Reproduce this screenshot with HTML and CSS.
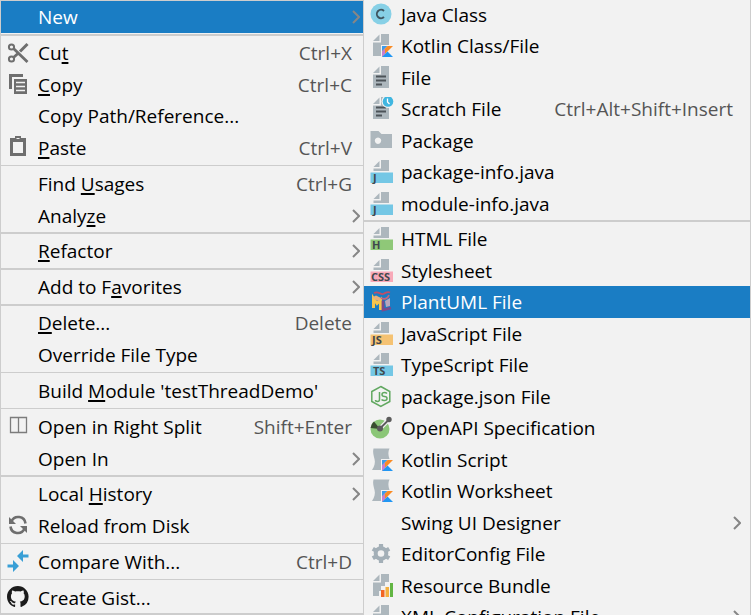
FILE: index.html
```html
<!DOCTYPE html>
<html lang="en">
<head>
<meta charset="utf-8">
<title>Context menu</title>
<link rel="stylesheet" href="styles.css">
</head>
<body>
<svg class="defs" aria-hidden="true">
  <defs>
    <g id="kotlin-badge">
      <path d="M12 12h5.500l-5.500 5.500z" fill="#3d9be9"/>
      <path d="M17.500 12H23L12 23V17.500z" fill="#f98b25"/>
      <path d="M12 17.500l3-3v5.500l-3 3z" fill="#c77fd0"/>
      <path d="M12 23l5.500-5.500L23 23z" fill="#2196f3"/>
    </g>
    <g id="doc-top" fill="#adb7bd">
      <path d="M3.500 7L9.500 1v6z"/>
      <path d="M11 0h8v11H3.500V8.500H11z"/>
    </g>
    <g id="doc" fill="#adb7bd">
      <path d="M3 7L9.500 .5V7z"/>
      <path d="M11 0h8v22H3V8.500h8z"/>
    </g>
    <g id="doc-cut" fill="#adb7bd">
      <path d="M3 7L9.500 .5V7z"/>
      <path d="M11 0h8v11h-8v11H3V8.500h8z"/>
    </g>
    <path id="lines" d="M6 10.500h10M6 14.500h10M6 18.500h6" stroke="#4c5358" stroke-width="2"/>
    <path id="scroll" fill="#adb7bd" d="M3.500 .5H19.500c-1.500 3-1.500 6 0 10.500H11V22H2c2.500-4 3.500-7 2.500-11C3.500 7 2.500 4 3.500 .5z"/>
    <path id="chevron" d="M1 1l6 6-6 6" fill="none" stroke="#868686" stroke-width="2"/>
  </defs>
</svg>
<main class="menus">
  <div class="menu menu-context" role="menu" aria-label="Context">
    <div class="group">
      <button class="item active" role="menuitem"><span class="icon"></span><span class="label">New</span><svg class="arrow" viewBox="0 0 8 14"><use href="#chevron"/></svg></button>
    </div>
    <hr class="thick">
    <div class="group">
      <button class="item" role="menuitem"><svg class="icon" viewBox="0 0 24 24"><g fill="none" stroke="#6e6e6e"><circle cx="5.500" cy="6" r="2.600" stroke-width="2"/><circle cx="5.500" cy="18" r="2.600" stroke-width="2"/><path d="M7.500 7.500L21.500 21M7.500 16.500l5-4.500" stroke-width="2.800"/><path d="M14 10.500L21.500 3" stroke-width="3"/></g></svg><span class="label">Cu<u>t</u></span><kbd>Ctrl+X</kbd></button>
      <button class="item" role="menuitem"><svg class="icon" viewBox="0 0 24 24"><path d="M3 1h14v3H6v12H3z" fill="#6e6e6e"/><path d="M8 6h13v15H8z" fill="#6e6e6e"/><path d="M10 9.500h9M10 13.500h9M10 17.500h9" stroke="#f2f2f2" stroke-width="1.500"/></svg><span class="label"><u>C</u>opy</span><kbd>Ctrl+C</kbd></button>
      <button class="item" role="menuitem"><span class="icon"></span><span class="label">Copy Path/Reference...</span></button>
      <button class="item" role="menuitem"><svg class="icon" viewBox="0 0 24 24"><path fill="#6e6e6e" fill-rule="evenodd" d="M4 2h5V0h6v2h5v18H4zM7 6v11h10V6z"/><path d="M10.500 2.500h3" stroke="#f2f2f2"/></svg><span class="label"><u>P</u>aste</span><kbd>Ctrl+V</kbd></button>
    </div>
    <hr>
    <div class="group">
      <button class="item" role="menuitem"><span class="icon"></span><span class="label">Find <u>U</u>sages</span><kbd>Ctrl+G</kbd></button>
      <button class="item" role="menuitem"><span class="icon"></span><span class="label">Analy<u>z</u>e</span><svg class="arrow" viewBox="0 0 8 14"><use href="#chevron"/></svg></button>
    </div>
    <hr class="thick">
    <div class="group">
      <button class="item" role="menuitem"><span class="icon"></span><span class="label"><u>R</u>efactor</span><svg class="arrow" viewBox="0 0 8 14"><use href="#chevron"/></svg></button>
    </div>
    <hr class="thick">
    <div class="group">
      <button class="item" role="menuitem"><span class="icon"></span><span class="label">Add to F<u>a</u>vorites</span><svg class="arrow" viewBox="0 0 8 14"><use href="#chevron"/></svg></button>
    </div>
    <hr class="thick">
    <div class="group">
      <button class="item" role="menuitem"><span class="icon"></span><span class="label"><u>D</u>elete...</span><kbd>Delete</kbd></button>
      <button class="item" role="menuitem"><span class="icon"></span><span class="label">Override File Type</span></button>
    </div>
    <hr>
    <div class="group tight">
      <button class="item" role="menuitem"><span class="icon"></span><span class="label">Build <u>M</u>odule 'testThreadDemo'</span></button>
    </div>
    <hr>
    <div class="group">
      <button class="item" role="menuitem"><svg class="icon" viewBox="0 0 24 24"><path d="M4.500 2.500h16v15h-16zM12.500 2.500v15" fill="none" stroke="#7c7c7c" stroke-width="1.300"/></svg><span class="label">Open in Right Split</span><kbd>Shift+Enter</kbd></button>
      <button class="item" role="menuitem"><span class="icon"></span><span class="label">Open In</span><svg class="arrow" viewBox="0 0 8 14"><use href="#chevron"/></svg></button>
    </div>
    <hr class="thick">
    <div class="group">
      <button class="item" role="menuitem"><span class="icon"></span><span class="label">Local <u>H</u>istory</span><svg class="arrow" viewBox="0 0 8 14"><use href="#chevron"/></svg></button>
      <button class="item" role="menuitem"><svg class="icon" viewBox="0 0 24 24"><g fill="none" stroke="#6e6e6e" stroke-width="2.600"><path d="M5.500 7.500a7.300 7.300 0 0 1 14 2"/><path d="M18.500 14.500A7.300 7.300 0 0 1 4.500 12.500"/></g><path d="M3 3v7h7z" fill="#6e6e6e"/><path d="M21 19v-7h-7z" fill="#6e6e6e"/></svg><span class="label">Reload from Disk</span></button>
    </div>
    <hr>
    <div class="group tight">
      <button class="item" role="menuitem"><svg class="icon" viewBox="0 0 24 24"><path d="M22.500 4.500v3H17V12l-6-6 6-6v4.500zM1.500 14.500v3H7V22l6-6-6-6v4.500z" fill="#389fd6"/></svg><span class="label">Compare With...</span><kbd>Ctrl+D</kbd></button>
    </div>
    <hr>
    <div class="group tight">
      <button class="item" role="menuitem"><svg class="icon" viewBox="0 0 24 24"><path transform="translate(1 0) scale(1.350)" fill="#1b1b1b" d="M8 0C3.580 0 0 3.580 0 8c0 3.540 2.290 6.530 5.470 7.590.4.070.55-.17.55-.38 0-.19-.01-.82-.01-1.490-2.010.37-2.530-.49-2.690-.94-.09-.23-.48-.94-.82-1.130-.28-.15-.68-.52-.01-.53.63-.01 1.080.58 1.230.82.72 1.210 1.870.87 2.330.66.07-.52.28-.87.51-1.070-1.780-.2-3.640-.89-3.640-3.950 0-.87.31-1.590.82-2.150-.08-.2-.36-1.020.08-2.120 0 0 .67-.21 2.200.82.64-.18 1.320-.27 2-.27s1.360.09 2 .27c1.530-1.040 2.200-.82 2.200-.82.44 1.100.16 1.920.08 2.120.51.56.82 1.270.82 2.150 0 3.070-1.870 3.750-3.650 3.950.29.25.54.73.54 1.480 0 1.070-.01 1.930-.01 2.200 0 .21.15.46.55.38A8.010 8.010 0 0 0 16 8c0-4.420-3.580-8-8-8z"/></svg><span class="label">Create Gist...</span></button>
    </div>
  </div>

  <div class="menu menu-new" role="menu" aria-label="New">
    <div class="group">
      <button class="item" role="menuitem"><svg class="icon" viewBox="0 0 24 24"><circle cx="11" cy="11" r="10.500" fill="#87d0e6"/><path d="M14 8a4.200 4.200 0 1 0 0 6" fill="none" stroke="#3f5560" stroke-width="1.900"/></svg><span class="label">Java Class</span></button>
      <button class="item" role="menuitem"><svg class="icon" viewBox="0 0 24 24"><use href="#doc-cut"/><use href="#kotlin-badge"/></svg><span class="label">Kotlin Class/File</span></button>
      <button class="item" role="menuitem"><svg class="icon" viewBox="0 0 24 24"><use href="#doc"/><use href="#lines"/></svg><span class="label">File</span></button>
      <button class="item" role="menuitem"><svg class="icon" viewBox="0 0 24 24"><use href="#doc"/><use href="#lines"/><circle cx="18" cy="4.500" r="6.500" fill="#f2f2f2"/><circle cx="18" cy="4.500" r="5.300" fill="#40b6e0"/><path d="M17.500 1.500v3.500l2 2" fill="none" stroke="#fff" stroke-width="1.300"/></svg><span class="label">Scratch File</span><kbd>Ctrl+Alt+Shift+Insert</kbd></button>
      <button class="item" role="menuitem"><svg class="icon" viewBox="0 0 24 24"><path fill="#adb7bd" fill-rule="evenodd" d="M.5 2H8.500l3 3H22v14H.5zM8 8.500a3.200 3.200 0 1 0 .01 0z"/></svg><span class="label">Package</span></button>
      <button class="item" role="menuitem"><svg class="icon" viewBox="0 0 24 24"><use href="#doc-top"/><path d="M.5 12.500H23V23H.5z" fill="#74c7e5"/><text x="3" y="22">J</text></svg><span class="label">package-info.java</span></button>
      <button class="item" role="menuitem"><svg class="icon" viewBox="0 0 24 24"><use href="#doc-top"/><path d="M.5 12.500H23V23H.5z" fill="#74c7e5"/><text x="3" y="22">J</text></svg><span class="label">module-info.java</span></button>
    </div>
    <hr class="thick">
    <div class="group">
      <button class="item" role="menuitem"><svg class="icon" viewBox="0 0 24 24"><use href="#doc-top"/><path d="M.5 12.500H23V23H.5z" fill="#8fc878"/><text x="2" y="22">H</text></svg><span class="label">HTML File</span></button>
      <button class="item" role="menuitem"><svg class="icon" viewBox="0 0 24 24"><use href="#doc-top"/><path d="M.5 12.500H23V23H.5z" fill="#f8a9b8"/><text x="1" y="22">CSS</text></svg><span class="label">Stylesheet</span></button>
      <button class="item active" role="menuitem"><svg class="icon" viewBox="0 0 24 24"><path d="M3.500 18V8.500l3.500 5 3.500-3.500v10" fill="none" stroke="#f7c64d" stroke-width="3"/><path d="M2 7.500l4-2 6 3-3 3z" fill="#e9b07c"/><path d="M13 10.500v9.500l8-2" fill="none" stroke="#7b4a8c" stroke-width="2.800"/><path d="M15 11l5-3v8l-4 1z" fill="#b7a5bd"/><path d="M4 3c5-2.500 6 2 9 1s4-3 7-1.500" fill="none" stroke="#c04e68" stroke-width="1.800"/><path d="M11 8c4 2 7 0 8-3" fill="none" stroke="#c5657e" stroke-width="1.800"/></svg><span class="label">PlantUML File</span></button>
      <button class="item" role="menuitem"><svg class="icon" viewBox="0 0 24 24"><use href="#doc-top"/><path d="M.5 12.500H23V23H.5z" fill="#f5c272"/><text x="2" y="22">JS</text></svg><span class="label">JavaScript File</span></button>
      <button class="item" role="menuitem"><svg class="icon" viewBox="0 0 24 24"><use href="#doc-top"/><path d="M.5 12.500H23V23H.5z" fill="#74c7e5"/><text x="3" y="22">TS</text></svg><span class="label">TypeScript File</span></button>
      <button class="item" role="menuitem"><svg class="icon" viewBox="0 0 24 24"><g fill="none" stroke="#61a860" stroke-width="1.500"><path d="M10.800 1.500l9 5v10l-9 5-9-5v-10z"/><path d="M9.500 7v7.500q0 2-2 2t-2-1.500M17 8.500q-1-1-2.500-1-2.500 0-2.500 2t2.500 2 2.500 2-2.500 2q-2 0-3-1"/></g></svg><span class="label">package.json File</span></button>
      <button class="item" role="menuitem"><svg class="icon" viewBox="0 0 24 24"><circle cx="10" cy="13" r="9.500" fill="#8bc677"/><path d="M10 13L.5 12A9.500 9.500 0 0 1 4 5.500z" fill="#394d2f"/><path d="M10 12.500L19 3.500" stroke="#f2f2f2" stroke-width="4.500"/><path d="M10 12.500L19 3.500" stroke="#5c5c5c" stroke-width="1.800"/><circle cx="10" cy="12.500" r="3" fill="#5c5c5c"/><circle cx="19" cy="3.500" r="2.700" fill="#5c5c5c"/></svg><span class="label">OpenAPI Specification</span></button>
      <button class="item" role="menuitem"><svg class="icon" viewBox="0 0 24 24"><use href="#scroll"/><use href="#kotlin-badge"/></svg><span class="label">Kotlin Script</span></button>
      <button class="item" role="menuitem"><svg class="icon" viewBox="0 0 24 24"><use href="#scroll"/><use href="#kotlin-badge"/></svg><span class="label">Kotlin Worksheet</span></button>
      <button class="item" role="menuitem"><span class="icon"></span><span class="label">Swing UI Designer</span><svg class="arrow" viewBox="0 0 8 14"><use href="#chevron"/></svg></button>
      <button class="item" role="menuitem"><svg class="icon" viewBox="0 0 24 24"><circle cx="11" cy="11.500" r="5.300" fill="none" stroke="#a3afb7" stroke-width="4"/><path d="M11 2v3M11 18v3M2.800 6.700l2.600 1.500M16.600 14.800l2.600 1.500M2.800 16.300l2.600-1.500M16.600 8.200l2.600-1.500" stroke="#a3afb7" stroke-width="4.200"/></svg><span class="label">EditorConfig File</span></button>
      <button class="item" role="menuitem"><svg class="icon" viewBox="0 0 24 24"><path fill="#adb7bd" d="M3 7L9.500 .5V7zM11 0h8v8h-4v4h-4v5H9v5H3V8.500h8z"/><path d="M11 16h3.500v7H11z" fill="#f26522"/><path d="M15.500 13H19v10h-3.500z" fill="#f4af3d"/><path d="M20 9h3v14h-3z" fill="#62b543"/></svg><span class="label">Resource Bundle</span></button>
      <button class="item" role="menuitem"><svg class="icon" viewBox="0 0 24 24"><use href="#doc"/></svg><span class="label">XML Configuration File</span><svg class="arrow" viewBox="0 0 8 14"><use href="#chevron"/></svg></button>
    </div>
  </div>
</main>
</body>
</html>
```
FILE: styles.css
```css
* { box-sizing: border-box; }

body {
  margin: 0;
  background: #fff;
  font-family: "Open Sans", "Noto Sans", sans-serif;
  font-size: 19px;
  line-height: 26px;
  color: #000;
}

.defs {
  position: absolute;
  width: 0;
  height: 0;
}

.menus {
  display: grid;
  grid-template-columns: 363fr 388fr;
  align-items: start;
  height: 100vh;
  padding-right: 3px;
  overflow: hidden;
}

.menu {
  background: #f2f2f2;
  border: 1px solid #cdcdcd;
}

.menu-context {
  border-right: 0;
  border-bottom-width: 2px;
}

.menu-new {
  margin-top: -2px;
}

.group {
  display: grid;
  grid-auto-rows: 32px 31px;
}

.menu-new .group:first-child {
  grid-auto-rows: 31px 32px;
}

.group.tight {
  grid-auto-rows: 31px;
}

hr {
  height: 1px;
  margin: 2px 0;
  border: 0;
  background: #cdcdcd;
}

hr.thick {
  height: 2px;
  margin: 1px 0;
}

.item {
  display: flex;
  align-items: center;
  min-width: 0;
  margin: 0;
  padding: 0 11px 0 5px;
  border: 0;
  background: none;
  color: inherit;
  font: inherit;
  text-align: left;
  white-space: nowrap;
}

.menu-new .item {
  padding: 0 17px 0 6px;
}

.item.active {
  background: #1a7dc4;
  color: #fff;
}

.icon {
  flex: none;
  width: 24px;
  height: 24px;
  margin-right: 8px;
}

.menu-new .icon {
  margin-right: 7px;
}

.icon text {
  font: 700 11px "Open Sans", sans-serif;
  fill: #40484d;
}

.label {
  flex: 1;
}

u {
  text-decoration-thickness: 2px;
  text-underline-offset: 2px;
  text-decoration-skip-ink: none;
}

kbd {
  font: inherit;
  color: #555;
}

.arrow {
  flex: none;
  width: 8px;
  height: 14px;
  margin-right: -8px;
}
```
